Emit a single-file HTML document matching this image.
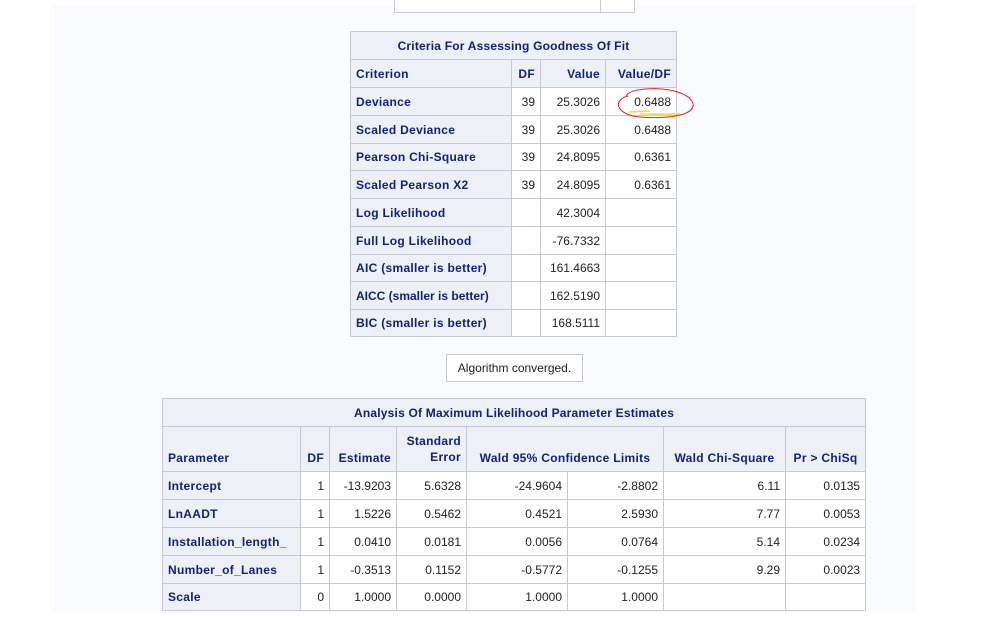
<!DOCTYPE html>
<html><head><meta charset="utf-8"><style>
html,body{margin:0;padding:0;width:998px;height:617px;background:#fff;overflow:hidden;position:relative;font-family:"Liberation Sans",Arial,sans-serif}
.bg{position:absolute;left:53px;top:4px;width:863px;height:609px;background:#fafbfe}
table{position:absolute;border-collapse:collapse;table-layout:fixed;font-size:12px}
td{border:1px solid #c6c9d1;padding:0 5px;white-space:nowrap;color:#222}
td.h{background:#edf0f7;color:#112277;font-weight:bold;letter-spacing:0.3px}
td.t{background:#edf0f7;color:#112277;font-weight:bold;text-align:center;letter-spacing:0.2px}
td.r{text-align:right;background:#fff}
td.e{background:#fff}
.hr{text-align:right}
.box{position:absolute;background:#fff;border:1px solid #c6c9d1;font-size:12px;color:#222}
</style></head><body>
<div class="bg"></div>
<div class="box" style="left:394px;top:-2px;width:206px;height:14px;border-top:none"></div>
<div class="box" style="left:600px;top:-2px;width:33px;height:14px;border-top:none"></div>

<table style="left:350px;top:31px;width:326px">
<colgroup><col style="width:161px"><col style="width:29px"><col style="width:65px"><col style="width:71px"></colgroup>
<tr style="height:28px"><td class="t" colspan="4">Criteria For Assessing Goodness Of Fit</td></tr>
<tr style="height:28px"><td class="h">Criterion</td><td class="h hr">DF</td><td class="h hr">Value</td><td class="h hr">Value/DF</td></tr>
<tr style="height:28px"><td class="h">Deviance</td><td class="r">39</td><td class="r">25.3026</td><td class="r">0.6488</td></tr>
<tr style="height:28px"><td class="h">Scaled Deviance</td><td class="r">39</td><td class="r">25.3026</td><td class="r">0.6488</td></tr>
<tr style="height:27px"><td class="h">Pearson Chi-Square</td><td class="r">39</td><td class="r">24.8095</td><td class="r">0.6361</td></tr>
<tr style="height:28px"><td class="h">Scaled Pearson X2</td><td class="r">39</td><td class="r">24.8095</td><td class="r">0.6361</td></tr>
<tr style="height:28px"><td class="h">Log Likelihood</td><td class="e"></td><td class="r">42.3004</td><td class="e"></td></tr>
<tr style="height:28px"><td class="h">Full Log Likelihood</td><td class="e"></td><td class="r">-76.7332</td><td class="e"></td></tr>
<tr style="height:27px"><td class="h">AIC (smaller is better)</td><td class="e"></td><td class="r">161.4663</td><td class="e"></td></tr>
<tr style="height:28px"><td class="h" style="letter-spacing:0">AICC (smaller is better)</td><td class="e"></td><td class="r">162.5190</td><td class="e"></td></tr>
<tr style="height:27px"><td class="h">BIC (smaller is better)</td><td class="e"></td><td class="r">168.5111</td><td class="e"></td></tr>
</table>

<svg style="position:absolute;left:0;top:0" width="998" height="617">
<path d="M628 96 C612 100,616 115,640 117 C665 119,695 116,693 104 C691 94,670 87,645 89 C635 90,628 92,626 96" fill="none" stroke="#e02020" stroke-width="1"/>
<path d="M629 112 L650 111 M640 114 L680 114" stroke="#f0e020" stroke-width="1.5" fill="none"/>
</svg>

<div class="box" style="left:446px;top:354px;width:135px;height:26px;line-height:26px;text-align:center">Algorithm converged.</div>

<table style="left:162px;top:398px;width:703px">
<colgroup><col style="width:138px"><col style="width:29px"><col style="width:67px"><col style="width:70px"><col style="width:101px"><col style="width:96px"><col style="width:122px"><col style="width:80px"></colgroup>
<tr style="height:28px"><td class="t" colspan="8">Analysis Of Maximum Likelihood Parameter Estimates</td></tr>
<tr style="height:45px"><td class="h" style="vertical-align:bottom;padding-bottom:6px">Parameter</td><td class="h hr" style="vertical-align:bottom;padding-bottom:6px">DF</td><td class="h hr" style="vertical-align:bottom;padding-bottom:6px">Estimate</td><td class="h hr" style="vertical-align:bottom;padding-bottom:6px;line-height:16px">Standard<br>Error</td><td class="h" colspan="2" style="vertical-align:bottom;padding-bottom:6px;text-align:center">Wald 95% Confidence Limits</td><td class="h" style="vertical-align:bottom;padding-bottom:6px;text-align:center">Wald Chi-Square</td><td class="h" style="vertical-align:bottom;padding-bottom:6px;text-align:center">Pr &gt; ChiSq</td></tr>
<tr style="height:28px"><td class="h">Intercept</td><td class="r">1</td><td class="r">-13.9203</td><td class="r">5.6328</td><td class="r">-24.9604</td><td class="r">-2.8802</td><td class="r">6.11</td><td class="r">0.0135</td></tr>
<tr style="height:28px"><td class="h">LnAADT</td><td class="r">1</td><td class="r">1.5226</td><td class="r">0.5462</td><td class="r">0.4521</td><td class="r">2.5930</td><td class="r">7.77</td><td class="r">0.0053</td></tr>
<tr style="height:28px"><td class="h">Installation_length_</td><td class="r">1</td><td class="r">0.0410</td><td class="r">0.0181</td><td class="r">0.0056</td><td class="r">0.0764</td><td class="r">5.14</td><td class="r">0.0234</td></tr>
<tr style="height:28px"><td class="h">Number_of_Lanes</td><td class="r">1</td><td class="r">-0.3513</td><td class="r">0.1152</td><td class="r">-0.5772</td><td class="r">-0.1255</td><td class="r">9.29</td><td class="r">0.0023</td></tr>
<tr style="height:27px"><td class="h">Scale</td><td class="r">0</td><td class="r">1.0000</td><td class="r">0.0000</td><td class="r">1.0000</td><td class="r">1.0000</td><td class="e"></td><td class="e"></td></tr>
</table>
</body></html>
